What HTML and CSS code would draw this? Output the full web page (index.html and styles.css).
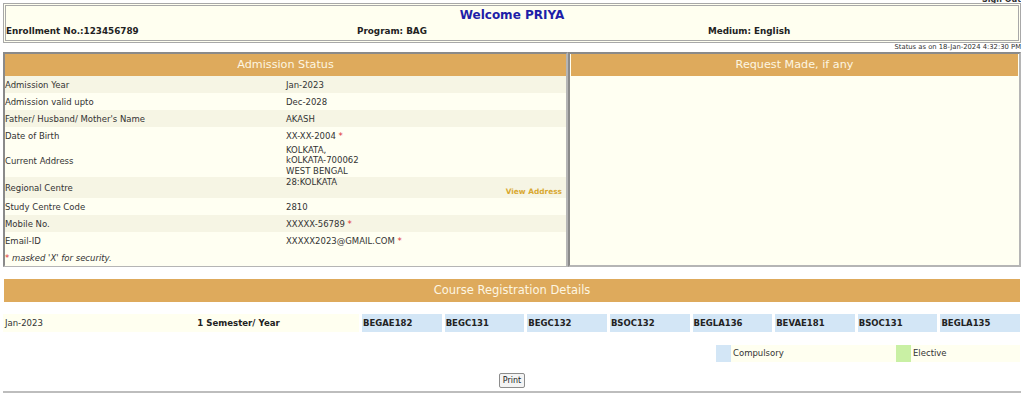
FILE: index.html
```html
<!DOCTYPE html>
<html>
<head>
<meta charset="utf-8">
<link rel="stylesheet" href="styles.css">
</head>
<body>
<div class="signout">Sign Out</div>
<div class="topbox">
  <div class="welcome">Welcome PRIYA</div>
  <div class="info">
    <span>Enrollment No.:123456789</span>
    <span>Program: BAG</span>
    <span>Medium: English</span>
  </div>
</div>
<div class="status">Status as on 18-Jan-2024 4:32:30 PM</div>
<div class="panels">
  <div class="panel left">
    <div class="phead">Admission Status</div>
    <div class="row dark"><span class="lbl">Admission Year</span><span class="val">Jan-2023</span></div>
    <div class="row"><span class="lbl">Admission valid upto</span><span class="val">Dec-2028</span></div>
    <div class="row dark"><span class="lbl">Father/ Husband/ Mother's Name</span><span class="val">AKASH</span></div>
    <div class="row"><span class="lbl">Date of Birth</span><span class="val">XX-XX-2004 <b class="star">*</b></span></div>
    <div class="row addr"><span class="lbl">Current Address</span><span class="val multi">KOLKATA,<br>kOLKATA-700062<br>WEST BENGAL</span></div>
    <div class="row dark rc"><span class="lbl">Regional Centre</span><span class="val rcval"><span>28:KOLKATA</span><a class="view">View Address</a></span></div>
    <div class="row"><span class="lbl">Study Centre Code</span><span class="val">2810</span></div>
    <div class="row dark"><span class="lbl">Mobile No.</span><span class="val">XXXXX-56789 <b class="star">*</b></span></div>
    <div class="row"><span class="lbl">Email-ID</span><span class="val">XXXXX2023@GMAIL.COM <b class="star">*</b></span></div>
    <div class="row note"><span class="lbl"><b class="star">*</b> <i>masked 'X' for security.</i></span></div>
  </div>
  <div class="panel right">
    <div class="phead">Request Made, if any</div>
  </div>
</div>
<div class="chead">Course Registration Details</div>
<div class="courses">
  <div class="cinfo">
    <span class="cyear">Jan-2023</span>
    <span class="csem">1 Semester/ Year</span>
  </div>
  <div class="code">BEGAE182</div>
  <div class="code">BEGC131</div>
  <div class="code">BEGC132</div>
  <div class="code">BSOC132</div>
  <div class="code">BEGLA136</div>
  <div class="code">BEVAE181</div>
  <div class="code">BSOC131</div>
  <div class="code">BEGLA135</div>
</div>
<div class="legend">
  <span class="sw blue"></span><span class="lg">Compulsory</span>
  <span class="sw green"></span><span class="lg">Elective</span>
</div>
<div class="printrow"><button class="print">Print</button></div>
<hr class="rule">
</body>
</html>
```
FILE: styles.css
```css
html, body { margin: 0; padding: 0; background: #fff; }
body {
  font-family: "DejaVu Sans", Verdana, sans-serif;
  font-size: 8.5px;
  color: #333;
  padding: 0 3px;
  overflow: hidden;
}
.signout {
  text-align: right;
  font-size: 8px;
  font-weight: bold;
  height: 3px;
  line-height: 0;
  color: #333;
  overflow: hidden;
}
.topbox {
  height: 34px;
  border: 3px double #a8a8a8;
  background: #fffff0;
}
.welcome {
  text-align: center;
  font-weight: bold;
  font-size: 12px;
  color: #1e1ea8;
  line-height: 18px;
}
.info {
  display: grid;
  grid-template-columns: 351px 351px 1fr;
  font-weight: bold;
  font-size: 8.8px;
  color: #222;
  line-height: 14px;
}
.status {
  text-align: right;
  font-size: 6.8px;
  line-height: 9px;
  color: #333;
}
.panels {
  display: flex;
  height: 215px;
}
.panel {
  border: 2px solid #8a8a8a;
  border-right-color: #b5b5b5;
  border-bottom-color: #b5b5b5;
  background: #fffff2;
}
.left { width: 561px; }
.right { flex: 1; }
.phead {
  background: #deaa5c;
  color: #fdf6e2;
  text-align: center;
  font-size: 11.2px;
  height: 22px;
  line-height: 22px;
}
.right .phead { margin-left: 1px; margin-right: 1px; }
.row {
  display: grid;
  grid-template-columns: 281px 1fr;
  height: 17px;
  align-items: center;
  background: #fffff2;
}
.row.dark { background: #f6f5e4; }
.lbl, .val { white-space: nowrap; }
.row.addr { height: 33px; }
.multi { line-height: 10.5px; }
.row.rc { height: 21px; }
.rcval {
  display: flex;
  flex-direction: column;
  align-self: stretch;
  line-height: 10px;
}
.view {
  align-self: flex-end;
  margin-right: 4px;
  font-size: 7.4px;
  font-weight: bold;
  color: #d9a830;
  line-height: 10px;
}
.star { color: #d33; font-weight: normal; }
.note i { font-style: italic; }
.chead {
  margin-top: 12px;
  background: #deaa5c;
  color: #fdf6e2;
  text-align: center;
  font-size: 11.5px;
  height: 23px;
  line-height: 23px;
  margin-left: 1px;
  margin-right: 1px;
}
.courses {
  margin-top: 12px;
  display: grid;
  grid-template-columns: 356px repeat(8, 1fr);
  column-gap: 3px;
  height: 18px;
  line-height: 18px;
  margin-right: 1px;
}
.cinfo {
  display: grid;
  grid-template-columns: 120px 1fr;
  background: #fffff0;
}
.cyear { padding-left: 2px; }
.csem { font-weight: bold; text-align: center; font-size: 8.6px; color: #222; padding-right: 5px; }
.code { background: #d3e6f6; font-weight: bold; font-size: 8.5px; color: #222; padding-left: 1px; }
.legend {
  margin-top: 13px;
  display: grid;
  grid-template-columns: 713px 15px 165px 15px 1fr;
  height: 17px;
  line-height: 17px;
  margin-right: 1px;
}
.legend::before { content: ""; }
.sw.blue { background: #d3e6f6; }
.sw.green { background: #c9f0a4; }
.lg { background: #fffff0; padding-left: 2px; }
.printrow {
  margin-top: 11px;
  text-align: center;
  height: 15px;
}
.print {
  font-family: "DejaVu Sans", Verdana, sans-serif;
  font-size: 8px;
  padding: 1px 3px;
  height: 15px;
  line-height: 11px;
  background: #f4f4f4;
  border: 1px solid #8c8c8c;
  border-radius: 2px;
  color: #222;
}
.rule {
  margin: 3px 0 0 0;
  border: 0;
  border-top: 2px solid #bdbdbd;
  height: 0;
}
```
